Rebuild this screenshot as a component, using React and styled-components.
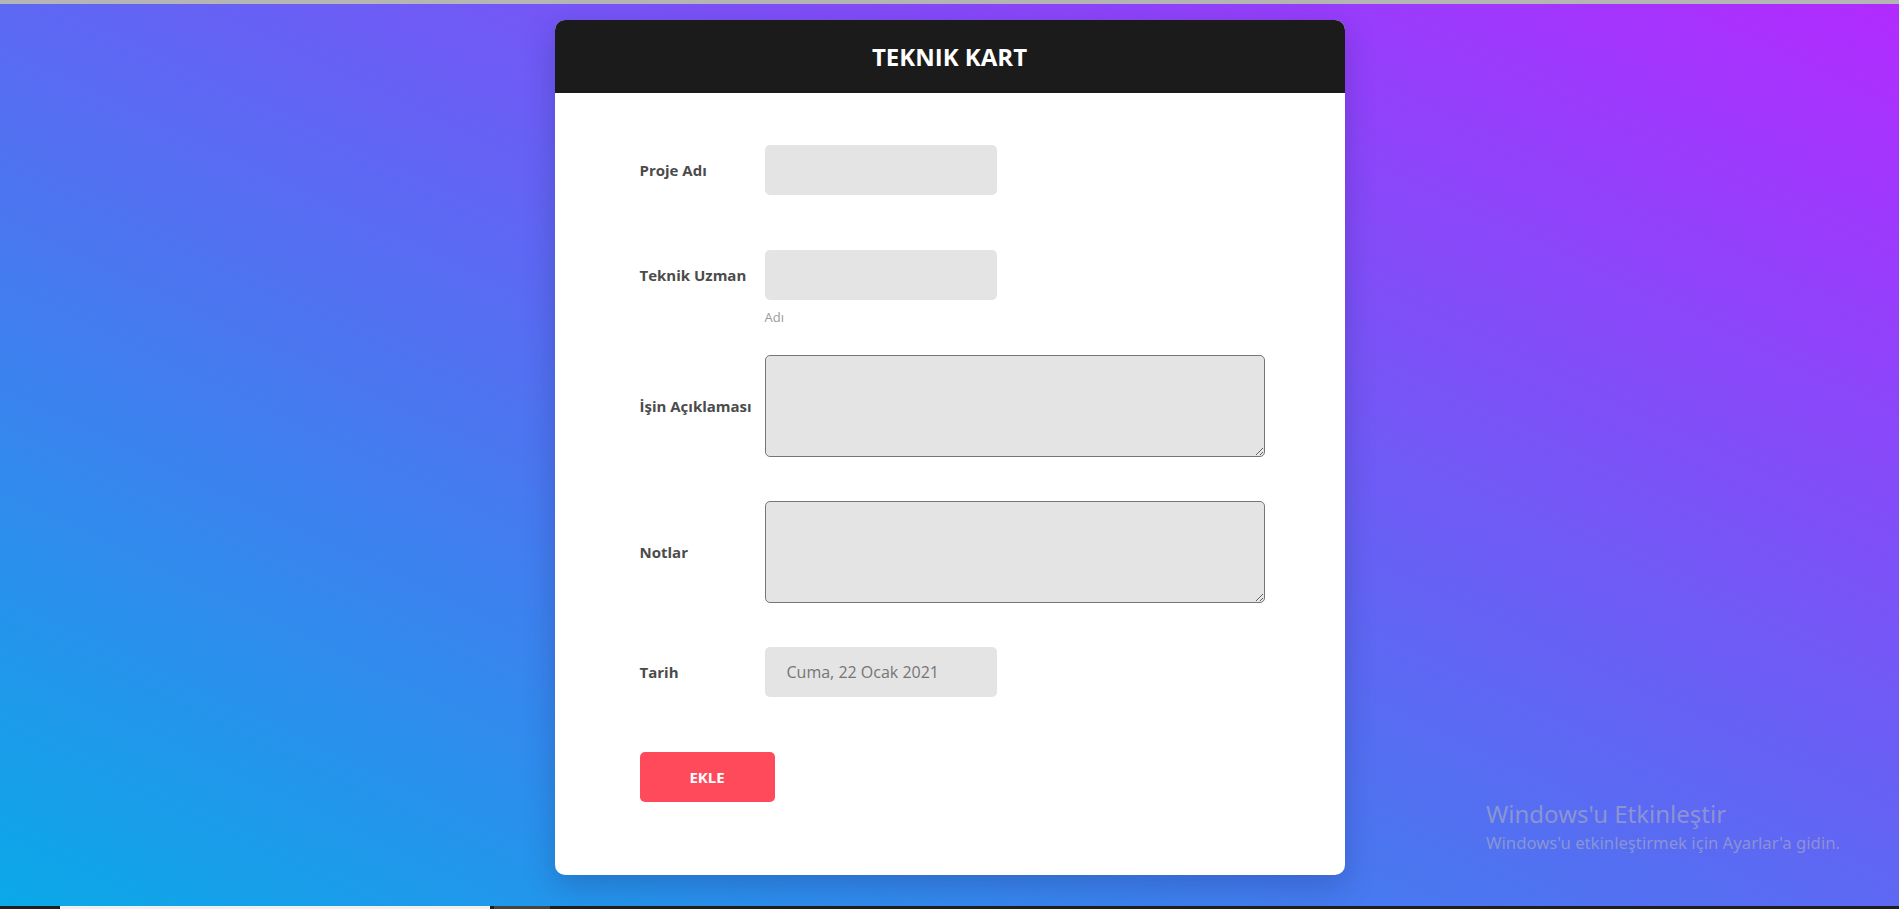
import React from 'react';
import styled, { createGlobalStyle } from 'styled-components';

const GlobalStyle = createGlobalStyle`
    html, body {
        margin: 0;
        padding: 0;
        height: 100%;
    }
    body {
        font-family: "Open Sans", "Noto Sans", sans-serif;
        overflow: hidden;
    }
    #root {
        height: 100%;
    }
`;

const Page = styled.div`
    position: relative;
    display: flex;
    flex-direction: column;
    height: 909px;
`;

const BrowserEdge = styled.div`
    height: 4px;
    background: #b5b5b5;
    flex: none;
`;

const Stage = styled.main`
    flex: 1;
    display: flex;
    justify-content: center;
    align-items: flex-start;
    padding-top: 16px;
    background: linear-gradient(to top right, #0aa9e8 0%, #5d68f3 50%, #b22aff 100%);
`;

const Card = styled.section`
    width: 790px;
    background: #fff;
    border-radius: 10px;
    box-shadow: 0 10px 30px rgba(20, 30, 90, 0.25);
    overflow: hidden;
`;

const CardHeader = styled.header`
    height: 73px;
    background: #1b1b1b;
    display: flex;
    align-items: center;
    justify-content: center;

    h2 {
        margin: 0;
        color: #fff;
        font-size: 24px;
        font-weight: 700;
        letter-spacing: 0;
    }
`;

const Form = styled.form`
    display: flex;
    flex-direction: column;
    align-items: flex-start;
    padding: 52px 85px 73px;
`;

const Row = styled.div`
    display: grid;
    grid-template-columns: 125px auto;
    align-items: center;
    margin-top: ${p => p.$space || 0}px;
`;

const Label = styled.label`
    font-size: 15px;
    font-weight: 700;
    color: #4b4b4b;
`;

const TextInput = styled.input`
    box-sizing: border-box;
    width: 232px;
    height: 50px;
    border: none;
    border-radius: 5px;
    background: #e4e4e4;
    padding: 0 22px;
    font-family: "Open Sans", sans-serif;
    font-size: 16px;
    color: #757575;
    outline: none;
`;

const TextArea = styled.textarea`
    box-sizing: border-box;
    display: block;
    width: 500px;
    height: 102px;
    margin: 0;
    border: 1px solid #767676;
    border-radius: 5px;
    background: #e4e4e4;
    font-family: "Open Sans", sans-serif;
    outline: none;
`;

const Helper = styled.small`
    grid-column: 2;
    margin-top: 8px;
    font-size: 13px;
    line-height: 18px;
    color: #9a9a9a;
`;

const SubmitButton = styled.button`
    margin-top: ${p => p.$space || 0}px;
    width: 135px;
    height: 50px;
    border: none;
    border-radius: 5px;
    background: #ff4a5c;
    color: #fff;
    font-family: "Open Sans", sans-serif;
    font-size: 15px;
    font-weight: 700;
    cursor: pointer;
`;

const Taskbar = styled.footer`
    height: 3px;
    flex: none;
    display: flex;
    background: #1e1e1e;
`;

const TaskSegment = styled.span`
    width: ${p => p.$w}px;
    margin-left: ${p => p.$offset || 0}px;
    background: ${p => p.$color};
`;

const Watermark = styled.div`
    position: absolute;
    left: 1486px;
    top: 798px;
    font-family: "Noto Sans", "Open Sans", sans-serif;
    color: rgba(175, 175, 190, 0.6);
    pointer-events: none;

    strong {
        display: block;
        font-weight: 400;
        font-size: 24px;
        line-height: 32px;
    }
    span {
        display: block;
        font-size: 16.7px;
        line-height: 26px;
    }
`;

export default function App() {
    return (
        <>
            <GlobalStyle />
            <Page>
                <BrowserEdge />
                <Stage>
                    <Card>
                        <CardHeader>
                            <h2>TEKNIK KART</h2>
                        </CardHeader>
                        <Form onSubmit={e => e.preventDefault()}>
                            <Row>
                                <Label htmlFor="proje">Proje Adı</Label>
                                <TextInput id="proje" type="text" />
                            </Row>
                            <Row $space={55}>
                                <Label htmlFor="uzman">Teknik Uzman</Label>
                                <TextInput id="uzman" type="text" />
                                <Helper>Adı</Helper>
                            </Row>
                            <Row $space={29}>
                                <Label htmlFor="aciklama">İşin Açıklaması</Label>
                                <TextArea id="aciklama" />
                            </Row>
                            <Row $space={44}>
                                <Label htmlFor="notlar">Notlar</Label>
                                <TextArea id="notlar" />
                            </Row>
                            <Row $space={44}>
                                <Label htmlFor="tarih">Tarih</Label>
                                <TextInput id="tarih" type="text" defaultValue="Cuma, 22 Ocak 2021" readOnly />
                            </Row>
                            <SubmitButton type="submit" $space={55}>EKLE</SubmitButton>
                        </Form>
                    </Card>
                </Stage>
                <Taskbar>
                    <TaskSegment $w={430} $offset={60} $color="#f0f0f0" />
                    <TaskSegment $w={56} $offset={4} $color="#454545" />
                </Taskbar>
                <Watermark>
                    <strong>Windows'u Etkinleştir</strong>
                    <span>Windows'u etkinleştirmek için Ayarlar'a gidin.</span>
                </Watermark>
            </Page>
        </>
    );
}
